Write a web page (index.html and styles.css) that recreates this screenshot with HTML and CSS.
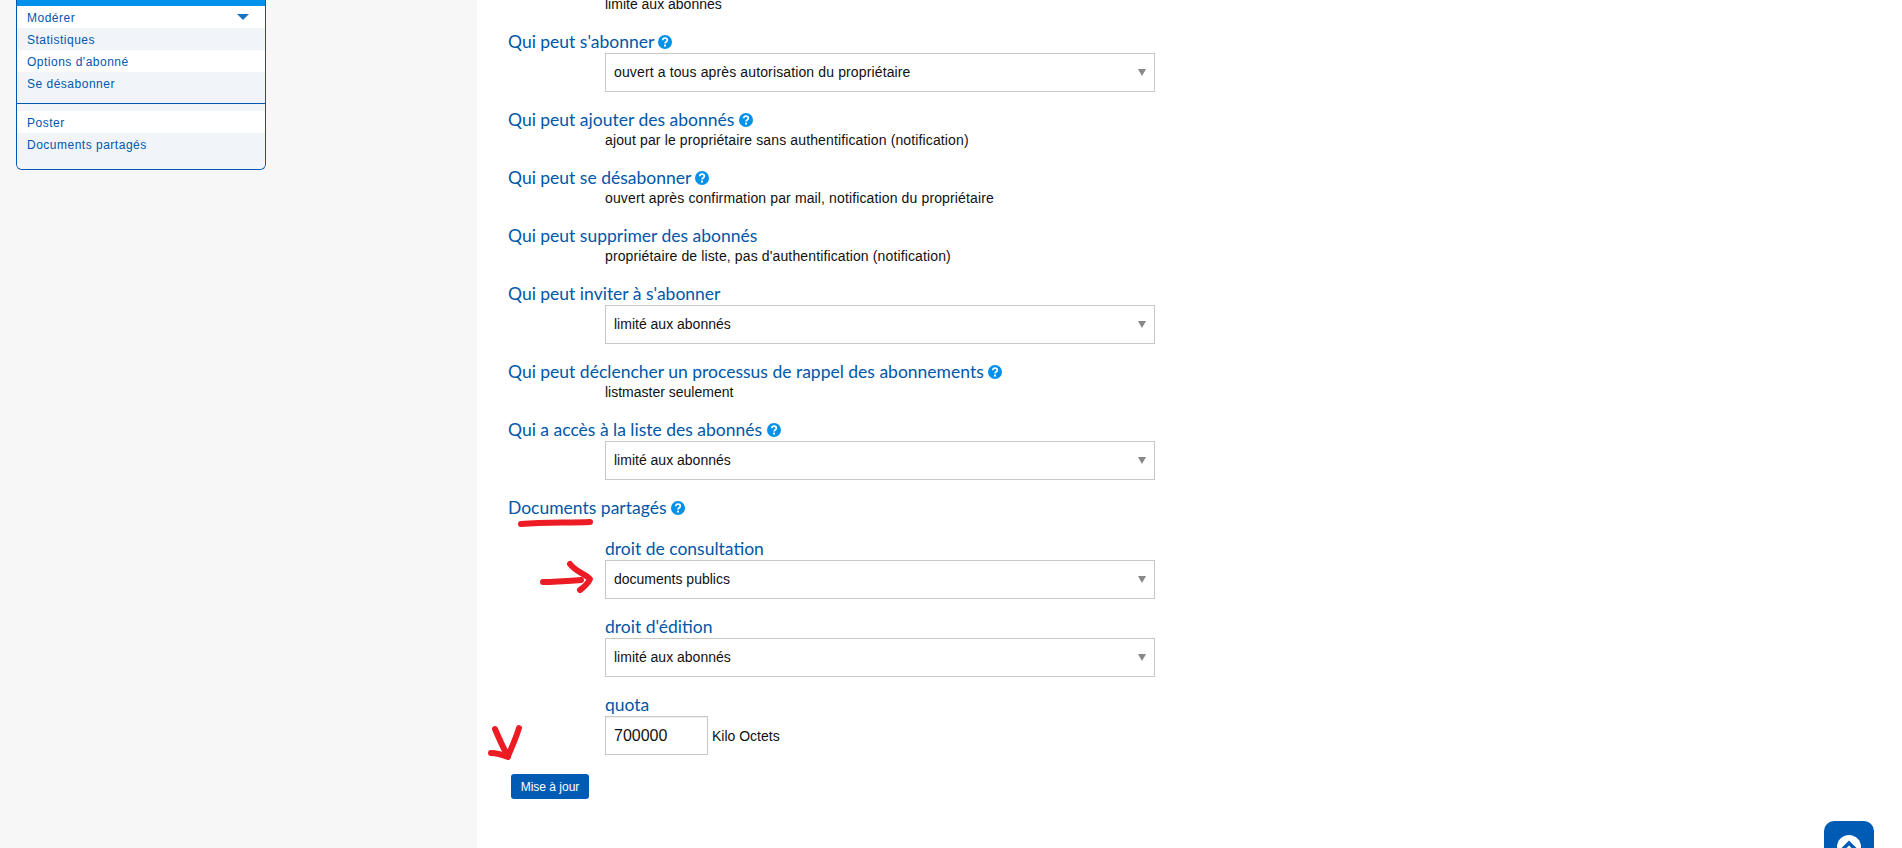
FILE: index.html
```html
<!DOCTYPE html>
<html lang="fr">
<head>
    <meta charset="UTF-8">
    <title>Options de la liste</title>
    <link rel="stylesheet" href="styles.css">
</head>
<body>
    <svg class="defs" width="0" height="0">
        <symbol id="help" viewBox="0 0 14 14">
            <circle cx="7" cy="7" r="7" fill="#0091ea"/>
            <path d="M4.700 5.300C4.800 3.900 5.800 3.200 7 3.200c1.300 0 2.300.8 2.300 2 0 1.900-2.300 1.700-2.300 3.400" fill="none" stroke="#fff" stroke-width="1.700"/>
            <rect x="6" y="9.600" width="2" height="1.900" fill="#fff"/>
        </symbol>
    </svg>

    <div class="page">
        <aside class="side">
            <nav class="menu">
                <div class="menu-head"></div>
                <a class="menu-item menu-arrow">Modérer</a>
                <a class="menu-item alt">Statistiques</a>
                <a class="menu-item">Options d'abonné</a>
                <a class="menu-item alt tail">Se désabonner</a>
                <div class="menu-sep"></div>
                <a class="menu-item">Poster</a>
                <a class="menu-item alt last">Documents partagés</a>
            </nav>
        </aside>

        <main class="content">
            <form>
                <div class="row">
                    <div class="value">limité aux abonnés</div>
                </div>

                <div class="row">
                    <div class="label">Qui peut s'abonner <svg class="help"><use href="#help"/></svg></div>
                    <div class="select-wrap">
                        <select class="long"><option>ouvert a tous après autorisation du propriétaire</option></select>
                    </div>
                </div>

                <div class="row">
                    <div class="label">Qui peut ajouter des abonnés <svg class="help"><use href="#help"/></svg></div>
                    <div class="value long">ajout par le propriétaire sans authentification (notification)</div>
                </div>

                <div class="row">
                    <div class="label">Qui peut se désabonner <svg class="help"><use href="#help"/></svg></div>
                    <div class="value long">ouvert après confirmation par mail, notification du propriétaire</div>
                </div>

                <div class="row">
                    <div class="label">Qui peut supprimer des abonnés</div>
                    <div class="value long">propriétaire de liste, pas d'authentification (notification)</div>
                </div>

                <div class="row">
                    <div class="label">Qui peut inviter à s'abonner</div>
                    <div class="select-wrap">
                        <select><option>limité aux abonnés</option></select>
                    </div>
                </div>

                <div class="row">
                    <div class="label">Qui peut déclencher un processus de rappel des abonnements <svg class="help"><use href="#help"/></svg></div>
                    <div class="value">listmaster seulement</div>
                </div>

                <div class="row">
                    <div class="label">Qui a accès à la liste des abonnés <svg class="help"><use href="#help"/></svg></div>
                    <div class="select-wrap">
                        <select><option>limité aux abonnés</option></select>
                    </div>
                </div>

                <div class="group">
                    <div class="label">Documents partagés <svg class="help"><use href="#help"/></svg></div>
                </div>

                <div class="row">
                    <div class="label sub">droit de consultation</div>
                    <div class="select-wrap">
                        <select><option>documents publics</option></select>
                    </div>
                </div>

                <div class="row">
                    <div class="label sub">droit d'édition</div>
                    <div class="select-wrap">
                        <select><option>limité aux abonnés</option></select>
                    </div>
                </div>

                <div class="row">
                    <div class="label sub">quota</div>
                    <div class="quota">
                        <input type="text" value="700000">
                        <span>Kilo Octets</span>
                    </div>
                </div>

                <button type="button" class="submit">Mise à jour</button>
            </form>
        </main>
    </div>

    <a class="to-top">
        <svg width="24" height="24" viewBox="0 0 24 24">
            <circle cx="12" cy="12" r="12" fill="#fff"/>
            <path d="M5.500 14.500L12 8l6.500 6.500" fill="none" stroke="#005bb5" stroke-width="3.500"/>
        </svg>
    </a>

    <!-- red marks drawn over the screenshot -->
    <svg class="marks" width="1902" height="848" viewBox="0 0 1902 848">
        <g fill="none" stroke="#ed1c24" stroke-width="6" stroke-linecap="round" stroke-linejoin="round">
            <path d="M521 524C545 522 568 523 590 522"/>
            <path d="M543 582C556 582 568 581 581 580"/>
            <path d="M570 564C576 572 584 573 590 579C588 584 584 587 580 590"/>
            <path d="M495 729C499 738 503 748 508 756C512 747 516 738 519 728"/>
            <path d="M491 753C497 753 503 755 508 757"/>
        </g>
    </svg>
</body>
</html>
```

FILE: styles.css
```css
html, body { margin: 0; height: 100%; overflow: hidden; }
body { font-family: "Liberation Sans", Arial, sans-serif; font-size: 14px; color: #111; background: #fff; }
.defs { position: absolute; }

.page { display: flex; height: 848px; }

/* left column */
.side { width: 461px; padding-left: 16px; background: #f7f7f7; flex-shrink: 0; }
.menu { width: 248px; border: 1px solid #0057b0; border-top: 0; border-radius: 0 0 6px 6px; background: #f1f4f8; overflow: hidden; }
.menu-head { height: 6px; background: #0091ea; }
.menu-item { display: block; box-sizing: border-box; height: 22px; padding: 1px 0 0 10px; line-height: 22px; font-size: 12px; letter-spacing: .5px; color: #0057b0; background: #fff; position: relative; }
.menu-item.alt { background: #f1f4f8; }
.menu-item.tail { height: 31px; }
.menu-item.last { height: 36px; }
.menu-sep { height: 7px; border-top: 1px solid #0057b0; }
.menu-arrow::after { content: ""; position: absolute; right: 16px; top: 8px; border: 6px solid transparent; border-top: 6px solid #1a72c0; border-bottom: 0; }

/* main form */
.content { flex: 1; padding-left: 31px; margin-top: -5px; }
.row { margin-bottom: 15px; }
.group { margin-bottom: 17px; }
.label { box-sizing: border-box; height: 24px; padding-top: 1px; line-height: 24px; font-family: Lato, sans-serif; font-size: 17.500px; color: #0057a8; white-space: nowrap; }
.label.sub { padding-left: 97px; }
.help { width: 14px; height: 14px; vertical-align: -1px; }
.value { height: 19px; line-height: 19px; padding-left: 97px; font-size: 14px; }
.long { letter-spacing: .13px; }

.select-wrap { position: relative; width: 550px; margin-left: 97px; }
.select-wrap::after { content: ""; position: absolute; right: 9px; top: 16px; border: 4.500px solid transparent; border-top: 7px solid #888; border-bottom: 0; }
select { display: block; width: 100%; height: 39px; padding: 0 8px 2px; appearance: none; background: #fff; border: 1px solid #c8c8c8; border-radius: 0; font-family: "Liberation Sans", Arial, sans-serif; font-size: 14px; color: #111; }

.quota { display: flex; align-items: center; gap: 4px; margin-left: 97px; }
.quota input { width: 103px; height: 39px; box-sizing: border-box; padding: 0 8px; border: 1px solid #c8c8c8; font-family: "Liberation Sans", Arial, sans-serif; font-size: 16px; color: #111; box-shadow: inset 0 1px 1px #eee; }

.submit { display: block; width: 78px; height: 25px; margin: 19px 0 0 3px; padding: 0; border: 0; border-radius: 3px; background: #005bb5; color: #fff; font-family: "Liberation Sans", Arial, sans-serif; font-size: 12px; }

/* back to top */
.to-top { position: fixed; left: 1824px; top: 821px; width: 50px; height: 50px; border-radius: 10px; background: #005bb5; }
.to-top svg { display: block; margin: 14px auto 0; }

.marks { position: absolute; left: 0; top: 0; pointer-events: none; }
```
